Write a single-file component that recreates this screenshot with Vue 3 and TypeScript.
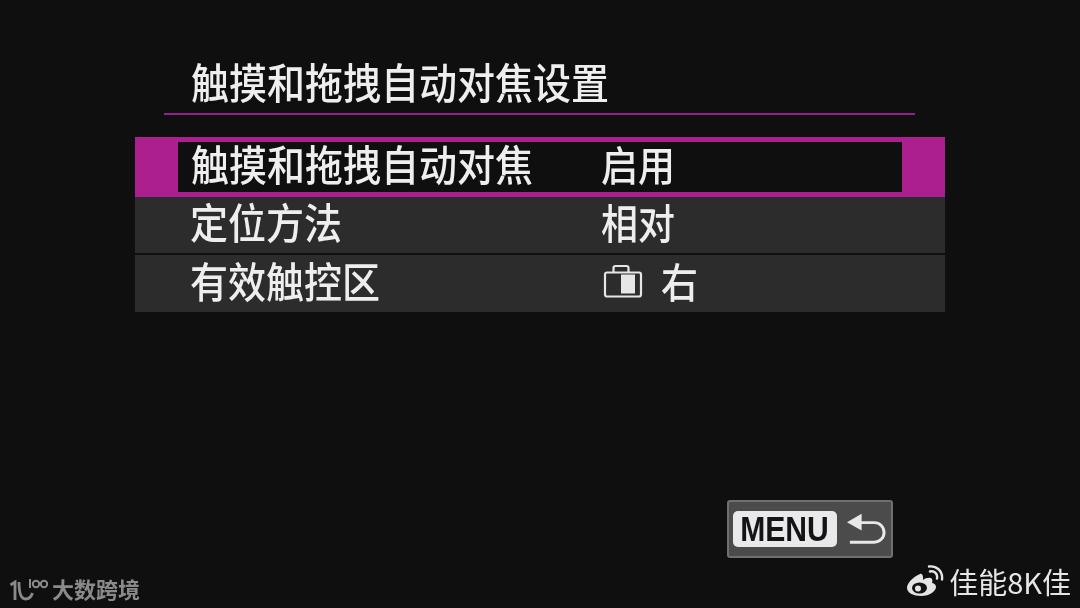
<script setup lang="ts">
interface Row { label: string; value: string; icon?: boolean; active?: boolean }
const rows: Row[] = [
  { label: '触摸和拖拽自动对焦', value: '启用', active: true },
  { label: '定位方法', value: '相对' },
  { label: '有效触控区', value: '右', icon: true },
]
</script>

<template>
  <div class="screen">
    <header class="head">
      <h1 class="title">触摸和拖拽自动对焦设置</h1>
    </header>
    <ul class="list">
      <li v-for="r in rows" :key="r.label" class="row" :class="{ active: r.active }">
        <div class="inner">
          <span class="label">{{ r.label }}</span>
          <span class="value">
            <svg v-if="r.icon" class="pad" width="40" height="34" viewBox="0 0 40 34">
              <path d="M2 10.500a2 2 0 0 1 2-2h32a2 2 0 0 1 2 2v20a2 2 0 0 1-2 2H4a2 2 0 0 1-2-2z" fill="none" stroke="#e6e6e6" stroke-width="2.200" />
              <path d="M10.500 8.500V4a2 2 0 0 1 2-2h11a2 2 0 0 1 2 2v4.500" fill="none" stroke="#e6e6e6" stroke-width="2.200" />
              <rect x="18" y="10.500" width="14" height="19" fill="#e6e6e6" />
            </svg>
            <span class="tall">{{ r.value }}</span>
          </span>
        </div>
      </li>
    </ul>
    <div class="foot">
      <div class="menu">
        <span class="key"><span class="key-text">MENU</span></span>
        <svg width="42" height="34" viewBox="0 0 42 34">
          <path d="M1 10 16 1.500v17z" fill="#e8e8e8" />
          <path d="M14 10.500h15a10 10 0 0 1 0 20H4" fill="none" stroke="#e8e8e8" stroke-width="3" />
        </svg>
      </div>
    </div>
    <div class="mark-left">
      <svg width="40" height="28" viewBox="0 0 40 28">
        <g fill="none" stroke="#8a8a8a" stroke-width="2.800">
          <path d="M1.500 11 6 8v18" />
          <path d="M10 8c0 11 2 17 6.500 17 3.500 0 6-3 7-6" />
          <path d="M21 5v9" stroke-width="2" />
          <circle cx="27" cy="10" r="3.200" stroke-width="2" />
          <circle cx="35" cy="10" r="3.200" stroke-width="2" />
        </g>
      </svg>
      <span>大数跨境</span>
    </div>
    <div class="mark-right">
      <svg width="38" height="32" viewBox="0 0 38 32">
        <path d="M14 9C7 12 1 18 1 23c0 5 7 8 14 8 9 0 15-5 15-9 0-3-3-4-4-4 1-3 0-5-2-5-2-.5-5 .5-7 2 .5-3-.5-7-3-6z" fill="#e4e4e4" />
        <ellipse cx="13.500" cy="23" rx="7.500" ry="5.500" fill="#111" />
        <circle cx="12" cy="23.500" r="3" fill="#e4e4e4" />
        <path d="M24 6.500c4-1 8 2 7 7M23 1.500c7-1 14 4 13 13" fill="none" stroke="#e4e4e4" stroke-width="2.400" stroke-linecap="round" />
      </svg>
      <span>佳能8K佳</span>
    </div>
  </div>
</template>

<style>
html, body { margin: 0; background: #0f0f0f; }
</style>

<style scoped>
.screen {
  position: relative;
  width: 1080px;
  height: 608px;
  box-sizing: border-box;
  padding: 58px 135px 0;
  background: #0f0f0f;
  color: #eeeeee;
  font-family: "Noto Sans CJK SC", "Noto Sans", sans-serif;
  font-weight: 500;
  overflow: hidden;
  filter: blur(0.4px);
}
.head {
  margin: 0 30px 0 29px;
  height: 57px;
  box-sizing: border-box;
  padding-left: 27px;
  border-bottom: 2px solid #98208a;
}
.title {
  margin: 0;
  font-size: 38px;
  line-height: 45px;
  font-weight: 500;
  transform: scaleY(1.1);
}
.list {
  list-style: none;
  margin: 22px 0 0;
  padding: 0;
  display: flex;
  flex-direction: column;
}
.row {
  height: 56px;
  background: #2c2c2c;
  margin-bottom: 2px;
}
.row:last-child {
  height: 57px;
  margin-bottom: 0;
}
.row.active {
  height: 60px;
  margin-bottom: 0;
  box-sizing: border-box;
  padding: 5px 43px;
  background: #ab1f8e;
}
.inner {
  display: flex;
  align-items: center;
  height: 100%;
  box-sizing: border-box;
  padding: 0 0 8px 55px;
  font-size: 38px;
}
.active .inner {
  padding: 0 0 9px 13px;
  background: #0f0f0f;
}
.label {
  width: 410px;
  flex: none;
  line-height: 48px;
  transform: scaleY(1.1);
}
.row:not(.active) .label {
  width: 411px;
}
.value {
  display: flex;
  align-items: center;
  gap: 18px;
  font-size: 37px;
  line-height: 48px;
}
.tall {
  display: block;
  transform: scaleY(1.1);
}
.pad { flex: none; margin: 3px 0 0 2px; }
.foot {
  display: flex;
  justify-content: flex-end;
  margin-top: 188px;
  padding-right: 52px;
}
.menu {
  display: flex;
  align-items: center;
  gap: 9px;
  width: 166px;
  height: 58px;
  box-sizing: border-box;
  padding: 0 4px;
  background: #4b4b4b;
  border: 2px solid #707070;
  border-radius: 3px;
}
.key {
  flex: none;
  width: 104px;
  height: 36px;
  display: flex;
  justify-content: center;
  background: #e9e9ec;
  border-radius: 5px;
  color: #141414;
  font-family: "Liberation Sans", sans-serif;
  font-weight: 700;
  font-size: 35px;
  line-height: 36px;
}
.key-text {
  display: block;
  transform: scaleX(0.86);
}
.mark-left {
  position: absolute;
  left: 9px;
  bottom: 6px;
  display: flex;
  align-items: center;
  gap: 3px;
  color: #8a8a8a;
  font-size: 22px;
  line-height: 28px;
  font-weight: 700;
}
.mark-right {
  position: absolute;
  right: 9px;
  bottom: 9px;
  display: flex;
  align-items: center;
  gap: 5px;
  color: #e6e6e6;
  font-size: 29px;
  font-weight: 400;
  line-height: 36px;
}
</style>
